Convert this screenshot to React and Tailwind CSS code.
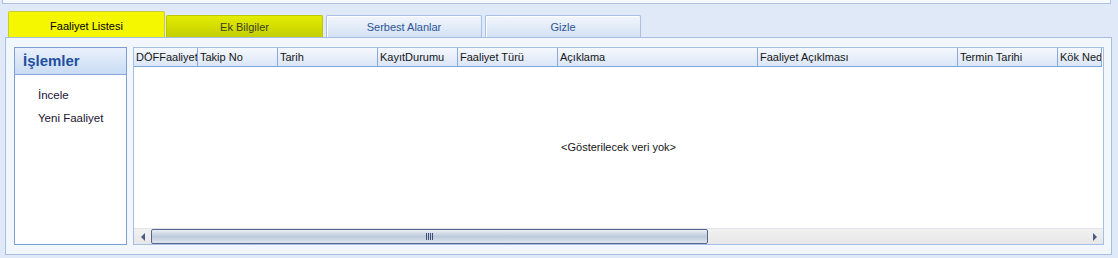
import React from 'react';

const columns = [
  { label: 'DÖFFaaliyet', w: 'w-[64px]' },
  { label: 'Takip No', w: 'w-[80px]' },
  { label: 'Tarih', w: 'w-[100px]' },
  { label: 'KayıtDurumu', w: 'w-[80px]' },
  { label: 'Faaliyet Türü', w: 'w-[100px]' },
  { label: 'Açıklama', w: 'w-[200px]' },
  { label: 'Faaliyet Açıklması', w: 'w-[200px]' },
  { label: 'Termin Tarihi', w: 'w-[100px]' },
  { label: 'Kök Nedeni', w: 'flex-1 min-w-0' },
];

const Tab = ({ label, kind }) => {
  if (kind === 'active') {
    return (
      <div className="w-[157px] h-[26px] -mb-px pt-[3px] flex items-center justify-center rounded-t-[2px] border border-b-0 border-[#c9cc3a] bg-[#f4f700] text-black z-10">
        {label}
      </div>
    );
  }
  if (kind === 'hover') {
    return (
      <div className="w-[157px] h-[22px] mt-[4px] pt-[2px] flex items-center justify-center rounded-t-[2px] border border-b-0 border-[#bdc600] bg-gradient-to-b from-[#e4ec00] to-[#c3ce00] text-[#3b4221]">
        {label}
      </div>
    );
  }
  return (
    <div className="w-[156px] h-[22px] mt-[4px] pt-[2px] flex items-center justify-center rounded-t-[2px] border border-b-0 border-[#a9c0e2] bg-gradient-to-b from-[#f2f6fc] to-[#d4e2f5] text-[#2c5596] shadow-[inset_1px_1px_0_#ffffff]">
      {label}
    </div>
  );
};

const App = () => {
  return (
    <div className="w-[1118px] h-[258px] bg-[#dfe9f7] flex flex-col text-[11px] font-['Liberation_Sans',Arial,sans-serif] overflow-hidden">
      {/* top strip */}
      <div className="ml-[2px] mr-[7px] h-[4px] bg-[#f7f9fd] border-x border-b border-[#abc1df]"></div>

      {/* tabs */}
      <div className="flex items-start pl-[8px] mt-[7px] gap-[1px] h-[26px]">
        <Tab label="Faaliyet Listesi" kind="active" />
        <Tab label="Ek Bilgiler" kind="hover" />
        <div className="w-px" />
        <Tab label="Serbest Alanlar" />
        <div className="w-[1px]" />
        <Tab label="Gizle" />
      </div>

      {/* content panel */}
      <div className="ml-[5px] mr-[6px] h-[218px] border border-[#a7bee0] bg-[#f2f6fd] flex gap-[6px] pl-[8px] pr-[7px] pt-[9px] pb-[9px]">
        {/* sidebar */}
        <div className="w-[113px] shrink-0 border border-[#7f9fcf] bg-white flex flex-col">
          <div className="h-[27px] border-b border-[#8aa8d6] bg-gradient-to-b from-[#eaf1fc] to-[#c9dcf4] flex items-center pl-[8px] text-[15px] font-bold text-[#1f4f9f]">
            İşlemler
          </div>
          <div className="flex flex-col pl-[23px] pt-[13px] gap-[9px] text-[11.5px] text-[#221433]">
            <span className="leading-[14px]">İncele</span>
            <span className="leading-[14px]">Yeni Faaliyet</span>
          </div>
        </div>

        {/* grid */}
        <div className="flex-1 min-w-0 border border-[#a5bfe4] bg-white flex flex-col">
          <div className="h-[19px] flex border-b border-[#7fa6dc] bg-gradient-to-b from-[#f5f8fd] to-[#dae6f7] mr-[1px]">
            {columns.map((c, i) => (
              <div
                key={i}
                className={`${c.w} shrink-0 flex items-center pl-[2px] text-[#161616] overflow-hidden whitespace-nowrap border-r border-[#86aadc]`}
              >
                {c.label}
              </div>
            ))}
          </div>
          <div className="flex-1 flex items-center justify-center text-[#151515]">
            &lt;Gösterilecek veri yok&gt;
          </div>
          {/* horizontal scrollbar */}
          <div className="h-[16px] border-t border-[#e1e5eb] bg-gradient-to-b from-[#f1f1f1] to-[#e7e7e7] flex items-center">
            <div className="w-[17px] flex items-center justify-center">
              <div className="w-0 h-0 border-y-[4px] border-y-transparent border-r-[4px] border-r-[#4b5b83]" />
            </div>
            <div className="w-[557px] h-[15px] rounded-[2px] border border-[#56668c] bg-gradient-to-b from-[#eceff4] via-[#bccadb] to-[#e0e6ee] flex items-center justify-center gap-[1px]">
              <div className="w-px h-[7px] bg-[#3f4e76]" />
              <div className="w-px h-[7px] bg-[#3f4e76]" />
              <div className="w-px h-[7px] bg-[#3f4e76]" />
              <div className="w-px h-[7px] bg-[#3f4e76]" />
            </div>
            <div className="flex-1" />
            <div className="w-[17px] flex items-center justify-center">
              <div className="w-0 h-0 border-y-[4px] border-y-transparent border-l-[4px] border-l-[#4b5b83]" />
            </div>
          </div>
        </div>
      </div>
    </div>
  );
};

export default App;
